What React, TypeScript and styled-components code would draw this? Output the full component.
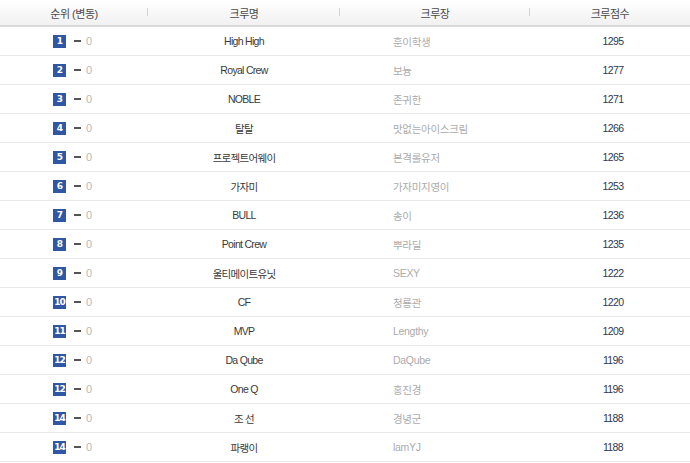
import * as React from 'react';
import styled, { createGlobalStyle } from 'styled-components';

const GlobalStyle = createGlobalStyle`
    html, body {
        margin: 0;
        padding: 0;
        background: #ffffff;
    }
    body {
        font-family: 'Liberation Sans', 'Noto Sans CJK KR', sans-serif;
        font-size: 11px;
    }
`;

const crews = [
    { rank: 1, name: 'High High', leader: '훈이학생', score: 1295 },
    { rank: 2, name: 'Royal Crew', leader: '보늉', score: 1277 },
    { rank: 3, name: 'NOBLE', leader: '존귀한', score: 1271 },
    { rank: 4, name: '탈탈', leader: '맛없는아이스크림', score: 1266 },
    { rank: 5, name: '프로젝트어웨이', leader: '본격롤유저', score: 1265 },
    { rank: 6, name: '가자미', leader: '가자미지영이', score: 1253 },
    { rank: 7, name: 'BULL', leader: '송이', score: 1236 },
    { rank: 8, name: 'Point Crew', leader: '뿌라딜', score: 1235 },
    { rank: 9, name: '울티메이트유닛', leader: 'SEXY', score: 1222 },
    { rank: 10, name: 'CF', leader: '청룡관', score: 1220 },
    { rank: 11, name: 'MVP', leader: 'Lengthy', score: 1209 },
    { rank: 12, name: 'Da Qube', leader: 'DaQube', score: 1196 },
    { rank: 12, name: 'One Q', leader: '홍진경', score: 1196 },
    { rank: 14, name: '조 선', leader: '경녕군', score: 1188 },
    { rank: 14, name: '파랭이', leader: 'lamYJ', score: 1188 }
];

const Table = styled.div`
    width: 690px;
`;

const columns = '148px 192px 190px 160px';

const HeaderRow = styled.div`
    display: grid;
    grid-template-columns: ${columns};
    height: 25px;
    background: linear-gradient(#ffffff, #f1f1f1);
    border-bottom: 2px solid #d9d9d9;
`;

const HeaderCell = styled.div<{ $divider?: boolean }>`
    position: relative;
    display: flex;
    align-items: center;
    justify-content: center;
    color: #4a4a4a;
    font-size: 11px;
    letter-spacing: -0.5px;

    &::after {
        content: '';
        display: ${({ $divider }) => ($divider ? 'block' : 'none')};
        position: absolute;
        right: 0;
        top: 8px;
        width: 1px;
        height: 8px;
        background: #d4d4d4;
    }
`;

const Row = styled.div`
    display: grid;
    grid-template-columns: ${columns};
    height: 28px;
    border-bottom: 1px solid #e9e9e9;
    align-items: center;
    font-size: 10.5px;
`;

const RankCell = styled.div`
    display: flex;
    align-items: center;
    padding-left: 53px;
`;

const Badge = styled.span`
    display: inline-flex;
    align-items: center;
    justify-content: center;
    width: 13px;
    height: 13px;
    background: #2f57a3;
    color: #ffffff;
    font-family: 'DejaVu Sans', sans-serif;
    font-weight: bold;
    font-size: 9px;
    letter-spacing: -1px;
`;

const Dash = styled.span`
    display: inline-block;
    width: 7px;
    height: 2px;
    background: #555555;
    margin-left: 8px;
`;

const Change = styled.span`
    color: #b8b8b8;
    margin-left: 5px;
    font-size: 11px;
`;

const NameCell = styled.div`
    text-align: center;
    color: #3a3a3a;
    letter-spacing: -0.7px;
`;

const LeaderCell = styled.div`
    padding-left: 53px;
    color: #ababab;
    letter-spacing: -0.3px;
`;

const ScoreCell = styled.div`
    text-align: center;
    padding-left: 6px;
    color: #2e3752;
    letter-spacing: -0.6px;
`;

export default function App() {
    return (
        <>
            <GlobalStyle />
            <Table>
                <HeaderRow>
                    <HeaderCell $divider>순위 (변동)</HeaderCell>
                    <HeaderCell $divider>크루명</HeaderCell>
                    <HeaderCell $divider>크루장</HeaderCell>
                    <HeaderCell>크루점수</HeaderCell>
                </HeaderRow>
                {crews.map((crew, i) => (
                    <Row key={i}>
                        <RankCell>
                            <Badge>{crew.rank}</Badge>
                            <Dash />
                            <Change>0</Change>
                        </RankCell>
                        <NameCell>{crew.name}</NameCell>
                        <LeaderCell>{crew.leader}</LeaderCell>
                        <ScoreCell>{crew.score}</ScoreCell>
                    </Row>
                ))}
            </Table>
        </>
    );
}
